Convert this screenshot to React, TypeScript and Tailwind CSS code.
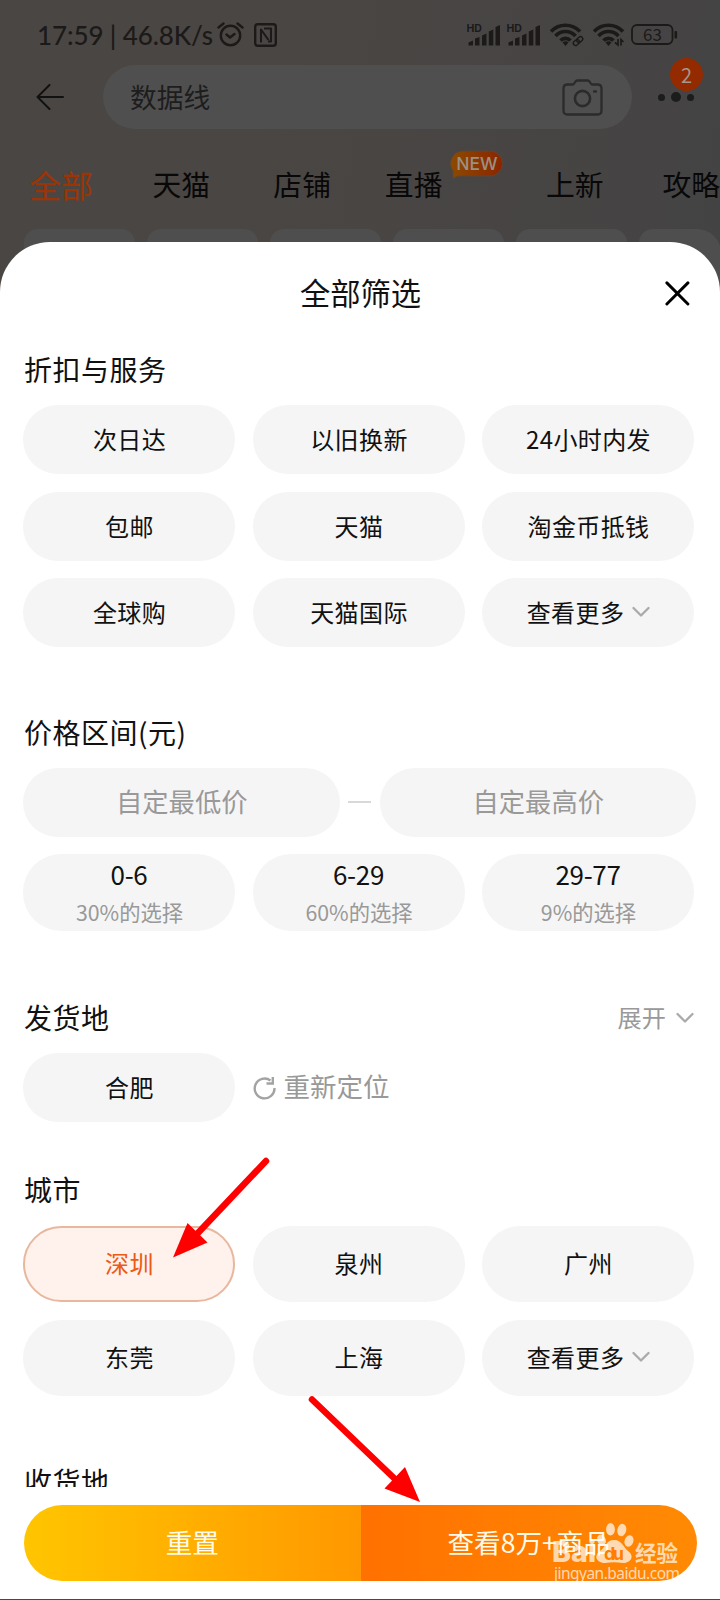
import { useState } from "react";
import clsx from "clsx";

const services = ["次日达", "以旧换新", "24小时内发", "包邮", "天猫", "淘金币抵钱", "全球购", "天猫国际"];
const cities = ["深圳", "泉州", "广州", "东莞", "上海"];
const prices = [
  { range: "0-6", share: "30%的选择" },
  { range: "6-29", share: "60%的选择" },
  { range: "29-77", share: "9%的选择" },
];

const MORE = "查看更多";

export default function App() {
  const [city, setCity] = useState("深圳");

  return (
    <div className="relative h-[1600px] w-[720px] overflow-hidden bg-[#494747] font-['Noto_Sans_CJK_SC',sans-serif] text-[#111]">
      <Backdrop />

      <main className="relative -mt-[58px] flex h-[1357px] flex-col overflow-hidden rounded-t-[50px] bg-white">
        <div className="flex min-h-0 flex-1 flex-col overflow-hidden pr-6 pl-[23px]">
          <header className="grid h-[104px] shrink-0 grid-cols-[36px_1fr_36px] items-center">
            <span />
            <h1 className="pb-1 pl-0.5 text-center text-[30.3px] leading-none">全部筛选</h1>
            <svg width="25" height="25" viewBox="0 0 24 24" className="mb-0.5 ml-[5px]" fill="none" stroke="#000" strokeWidth="2.8" strokeLinecap="round">
              <path d="M1.8 1.8 22 22M22 1.8 1.8 22" />
            </svg>
          </header>

          <Title className="h-[59px] pb-[13px]">折扣与服务</Title>
          <div className="grid shrink-0 grid-cols-[repeat(3,212px)] gap-x-[17.5px] gap-y-[17.5px]">
            {services.map((s) => (
              <Chip key={s}>{s}</Chip>
            ))}
            <Chip>
              {MORE}
              <Chevron className="ml-2" />
            </Chip>
          </div>

          <Title className="mt-[50px] h-[71px] pb-0.5">价格区间(元)</Title>
          <div className="flex shrink-0 items-center justify-between">
            <PriceInput label="自定最低价" />
            <span className="mb-0.5 h-0.5 w-[23px] bg-[#d8d8d8]" />
            <PriceInput label="自定最高价" />
          </div>
          <div className="mt-[17px] grid shrink-0 grid-cols-[repeat(3,212px)] gap-x-[17.5px]">
            {prices.map((p) => (
              <button key={p.range} className="flex h-[76.5px] flex-col items-center justify-center gap-[15px] rounded-[38px] bg-[#f5f5f5]">
                <span className="text-[26px] leading-[24px] tracking-[-0.3px]">{p.range}</span>
                <span className="pl-px text-[21.3px] leading-[22px] text-[#999]">{p.share}</span>
              </button>
            ))}
          </div>

          <div className="mt-[52px] flex h-[70.5px] shrink-0 items-center justify-between pb-px">
            <Title>发货地</Title>
            <button className="flex items-center text-[24.2px] leading-none text-[#999]">
              展开
              <Chevron className="mt-0.5 mr-0.5 ml-2.5" />
            </button>
          </div>
          <div className="flex shrink-0 items-center gap-[17.5px]">
            <Chip>合肥</Chip>
            <button className="flex items-center gap-2 pb-0.5 text-[26.5px] leading-none text-[#999]">
              <svg width="23" height="24" viewBox="0 0 23 24" className="mt-0.5" fill="none" stroke="#a3a3a3" strokeWidth="2.4">
                <path d="M21.5 12A9.9 9.9 0 1 1 17.5 4.500M19.8 1V7.5H13.5" />
              </svg>
              重新定位
            </button>
          </div>

          <Title className="mt-[33px] h-[70.5px] pb-0.5">城市</Title>
          <div className="grid shrink-0 grid-cols-[repeat(3,212px)] gap-[17.5px]">
            {cities.map((c) => (
              <Chip key={c} tall active={c === city} onClick={() => setCity(c)}>
                {c}
              </Chip>
            ))}
            <Chip tall>
              {MORE}
              <Chevron className="ml-2" />
            </Chip>
          </div>

          <Title className="mt-[50px] h-[71px] pb-0.5">收货地</Title>
        </div>

        <footer className="flex h-[112px] shrink-0 pt-[17.5px] pr-[23px] pl-6 text-[26.6px] leading-none text-[#fffbe8]">
          <button className="h-[76.5px] flex-1 rounded-l-[38px] bg-linear-to-r from-[#ffc500] to-[#ff9800]">重置</button>
          <button className="h-[76.5px] flex-1 rounded-r-[38px] bg-linear-to-r from-[#ff7100] to-[#ff8a04]">查看8万+商品</button>
        </footer>
      </main>

      <Arrows />
      <Watermark />
    </div>
  );
}

function Title({ children, className }: { children: React.ReactNode; className?: string }) {
  return <h2 className={clsx("flex shrink-0 items-center pl-px text-[28px] leading-none tracking-[0.5px]", className)}>{children}</h2>;
}

type ChipProps = {
  children: React.ReactNode;
  tall?: boolean;
  active?: boolean;
  onClick?: () => void;
};

function Chip({ children, tall, active, onClick }: ChipProps) {
  return (
    <button
      onClick={onClick}
      className={clsx(
        "flex w-[212px] items-center justify-center pb-px pl-px text-[24px] leading-none tracking-[0.4px]",
        tall ? "h-[76.5px] rounded-[38px]" : "h-[69px] rounded-[34.5px]",
        active ? "border-2 border-[#e8b89e] bg-[#fff1eb] text-[#ec5a14]" : "bg-[#f5f5f5]",
      )}
    >
      {children}
    </button>
  );
}

function PriceInput({ label }: { label: string }) {
  return (
    <div className="flex h-[69px] w-[316.5px] items-center justify-center rounded-[34.5px] bg-[#f5f5f5] pb-[3px] pl-px text-[26.3px] leading-none text-[#999]">
      {label}
    </div>
  );
}

function Chevron({ className }: { className?: string }) {
  return (
    <svg width="18" height="12" viewBox="0 0 18 12" className={className} fill="none" stroke="#aaa" strokeWidth="2.3" strokeLinecap="round" strokeLinejoin="round">
      <path d="M1.5 2 9 9.5 16.5 2" />
    </svg>
  );
}

// results page lying under the sheet, already dimmed
function Backdrop() {
  return (
    <div className="flex h-[300px] flex-col overflow-hidden bg-[linear-gradient(100deg,#4a4643_0%,#4a4643_35%,#484544_60%,#444343_100%)]">
      <div className="flex h-[65px] items-center pt-1 pl-[37px] text-[#1c1a19]">
        <span className="w-[180px] whitespace-nowrap font-['Lato',sans-serif] text-[26px] font-medium leading-none tracking-[-0.1px]">17:59 | 46.8K/s</span>
        <svg width="27" height="25" viewBox="0 0 27 25" fill="none" stroke="currentColor" strokeWidth="2.4" strokeLinecap="round" strokeLinejoin="round">
          <circle cx="13.5" cy="13.5" r="9.7" />
          <path d="M9.5 12.5 13 15.5 17.5 12M1.5 5.5 6.5 1.5M20.5 1.5 25.5 5.5" />
        </svg>
        <svg width="23" height="24" viewBox="0 0 23 24" className="ml-2.5" fill="none" stroke="currentColor" strokeWidth="2.4" strokeLinejoin="round">
          <rect x="1.2" y="1.2" width="20.6" height="21.6" rx="2.5" />
          <path d="M7 19.5V6.5L14.5 17M10 5.5H17V18.5H14" strokeWidth="2.1" />
        </svg>
        <div className="ml-[190px] flex items-center">
          <Signal />
          <Signal />
          <Wifi kind="link" />
          <Wifi kind="data" />
          <svg width="47" height="21" viewBox="0 0 47 21" className="-ml-0.5">
            <rect x="1" y="1" width="40.5" height="19" rx="5" fill="none" stroke="currentColor" strokeWidth="1.8" />
            <rect x="43.5" y="7" width="2.6" height="7.5" rx="1" fill="currentColor" />
            <text x="21.5" y="16.5" textAnchor="middle" fontSize="17" fill="currentColor" fontFamily="Noto Sans CJK SC, sans-serif">63</text>
          </svg>
        </div>
      </div>

      <div className="flex h-16 items-center">
        <svg width="28" height="26" viewBox="0 0 28 26" className="ml-9" fill="none" stroke="#111" strokeWidth="2" strokeLinecap="round" strokeLinejoin="round">
          <path d="M27 13H1.5M13.5 1 1.5 13l12 12" />
        </svg>
        <div className="ml-[39px] flex h-16 w-[529px] items-center justify-between rounded-full bg-[#504f4f] pr-[29px] pl-[27px]">
          <span className="text-[26.8px] leading-none text-[#1d1d1d]">数据线</span>
          <svg width="41" height="37" viewBox="0 0 41 37" fill="none" stroke="#2b2b2b" strokeWidth="2.3">
            <path d="M5.5 5.5H11C12.5 5.5 13 1.5 15 1.5H26C28 1.5 28.5 5.5 30 5.5H35.5Q39.5 5.5 39.5 9.5V31.5Q39.5 35.5 35.5 35.5H5.5Q1.5 35.5 1.5 31.5V9.5Q1.5 5.5 5.5 5.5Z" />
            <circle cx="20.5" cy="19.5" r="7.6" strokeWidth="2.6" />
            <path d="M31 12.5H35" />
          </svg>
        </div>
        <div className="relative ml-[26px] flex items-center gap-[6px]">
          <i className="size-[7px] rounded-full bg-[#1c1c1c]" />
          <i className="size-[10px] rounded-full bg-[#1c1c1c]" />
          <i className="size-[7px] rounded-full bg-[#1c1c1c]" />
          <span className="absolute -top-[34px] left-3 flex size-[33px] items-center justify-center rounded-full bg-[#942b00] text-[20px] leading-none text-[#a3968f]">2</span>
        </div>
      </div>

      <nav className="flex h-[100px] items-center whitespace-nowrap pt-[11px] pl-[29px] text-[28.8px] leading-none text-[#080808]">
        <span className="w-[124.5px] pb-px text-[32px] text-[#9c3505]">全部</span>
        <span className="w-[122px]">天猫</span>
        <span className="w-[112.5px]">店铺</span>
        <span className="relative w-[162.5px]">
          直播
          <svg width="55" height="30" viewBox="0 0 55 30" className="absolute -top-[20px] left-[64px]">
            <defs>
              <linearGradient id="badge">
                <stop offset="0" stopColor="#8c4a00" />
                <stop offset="1" stopColor="#8a2500" />
              </linearGradient>
            </defs>
            <path d="M14 1H41A12.5 12.5 0 0 1 41 26H11Q8 26 4 28.5L4 21A12.5 12.5 0 0 1 14 1Z" fill="url(#badge)" stroke="#5c4634" strokeWidth="1" />
            <text x="28" y="19.5" textAnchor="middle" fontSize="17.5" fontWeight="500" fill="#9d8f82" fontFamily="Inter, sans-serif">NEW</text>
          </svg>
        </span>
        <span className="w-[117.5px]">上新</span>
        <span>攻略</span>
      </nav>

      <div className="flex gap-3 pl-[23.5px]">
        {[0, 1, 2, 3, 4, 5].map((i) => (
          <div key={i} className="h-[71px] w-[111px] shrink-0 rounded-[14px] bg-[#4f4e4e] last:w-[82px] last:rounded-r-[24px]" />
        ))}
      </div>
    </div>
  );
}

function Signal() {
  return (
    <svg width="34" height="22" viewBox="0 0 34 22" className="mr-1.5" fill="currentColor">
      <text x="-0.5" y="8" fontSize="10.5" fontWeight="700" fontFamily="Inter, sans-serif">HD</text>
      <path d="M1.5 18.5 6 16.5V21.5H1.5ZM8 14.5 12.5 13V21.5H8ZM15 11.5 19.5 9.5V21.5H15ZM21.8 7.5 26.3 5.5V21.5H21.8ZM28.5 3 33 1V21.5H28.5Z" />
    </svg>
  );
}

function Wifi({ kind }: { kind: "link" | "data" }) {
  return (
    <svg width="34" height="24" viewBox="0 0 34 24" className="mr-1.5 ml-[3px]" fill="none" stroke="currentColor">
      <path d="M1 8.5A20 20 0 0 1 30 8.5M5.5 13A13.5 13.5 0 0 1 25.5 13M10.5 17.5A7 7 0 0 1 20.5 17.5" strokeWidth="3.6" />
      <path d="M12.5 19.5Q15.5 17 18.5 19.5L15.5 23Z" fill="currentColor" stroke="none" />
      {kind === "link" ? (
        <g strokeWidth="1.4" transform="rotate(-42 28 18)">
          <rect x="22.5" y="15.8" width="6.5" height="4.5" rx="2.2" />
          <rect x="27" y="15.8" width="6.5" height="4.5" rx="2.2" />
        </g>
      ) : (
        <path d="M25 16V22L22 19.5M28 22.5V16.5L30.5 19" strokeWidth="1.7" />
      )}
    </svg>
  );
}

function Arrows() {
  return (
    <svg width="720" height="1600" viewBox="0 0 720 1600" className="pointer-events-none absolute inset-0" fill="#f00">
      <path d="M266 1161 197 1234M312 1399.5 396 1480" stroke="#f00" strokeWidth="6.5" strokeLinecap="round" />
      <path d="M173 1257.5 187.5 1223 207.5 1242.5ZM420 1502 405 1467 384.5 1488.5Z" />
    </svg>
  );
}

function Watermark() {
  return (
    <div className="absolute top-[1522px] left-[553px] text-white/70">
      <svg width="134" height="60" viewBox="0 0 134 60" fill="currentColor">
        <text x="-1" y="40" fontSize="28" fontWeight="800" fontFamily="Inter, sans-serif" textLength="44" lengthAdjust="spacingAndGlyphs">Bai</text>
        <path d="M61 18C69 18 71 26 75 29C82 34 78 41 70 41C64 40 58 40 52 41C44 41 40 34 47 29C52 26 53 18 61 18Z" />
        <ellipse cx="48.5" cy="18" rx="4.2" ry="5.6" transform="rotate(-20 48.5 18)" />
        <ellipse cx="57.5" cy="7.3" rx="4.4" ry="6.2" />
        <ellipse cx="68.8" cy="8" rx="4.4" ry="6.2" transform="rotate(12 68.8 8)" />
        <ellipse cx="76" cy="19" rx="4.4" ry="5.8" transform="rotate(20 76 19)" />
        <text x="51" y="38" fontSize="18" fontWeight="700" fill="#ff7e00" fontFamily="Inter, sans-serif" textLength="20">du</text>
        <text x="82" y="39" fontSize="21.5" fontWeight="700" fontFamily="Noto Sans CJK SC, sans-serif">经验</text>
        <text x="1" y="57" fontSize="15.5" fontFamily="Noto Sans, sans-serif" textLength="126">jingyan.baidu.com</text>
      </svg>
    </div>
  );
}
